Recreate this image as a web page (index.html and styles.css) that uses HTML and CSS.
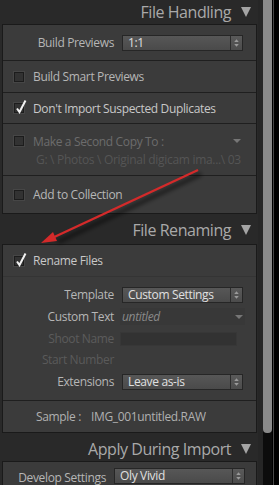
FILE: index.html
```html
<!DOCTYPE html>
<html>
<head>
<meta charset="utf-8">
<link rel="stylesheet" href="styles.css">
</head>
<body>
<div class="app">
  <div class="main">
    <div class="hdr h1"><span>File Handling</span><i class="tri"></i></div>
    <div class="panel">
      <div class="row r-prev">
        <span class="lbl">Build Previews</span>
        <div class="select"><span>1:1</span><svg class="stp" viewBox="0 0 12 15"><path d="M6 3.5 L8.5 6.5 H3.5Z M6 11.5 L8.5 8.5 H3.5Z" fill="#9a9a9a"/></svg></div>
      </div>
      <div class="row chk r-smart"><i class="box"></i><span>Build Smart Previews</span></div>
      <div class="row chk r-dup"><i class="box on"><svg viewBox="0 0 12 16"><path d="M2 9.5 L4.5 13 L10.5 1.5" fill="none" stroke="#f2f2f2" stroke-width="2"/></svg></i><span>Don't Import Suspected Duplicates</span></div>
      <div class="row r-copy">
        <div class="copy-top"><i class="box"></i><span class="dis">Make a Second Copy To :</span><i class="dtri"></i></div>
        <div class="path">G: \ Photos \ Original digicam ima...\ 03</div>
      </div>
      <div class="row chk r-coll"><i class="box"></i><span>Add to Collection</span></div>
    </div>

    <div class="hdr h2"><span>File Renaming</span><i class="tri"></i></div>
    <div class="panel">
      <div class="row chk r-ren"><i class="box on"><svg viewBox="0 0 12 16"><path d="M2 9.5 L4.5 13 L10.5 1.5" fill="none" stroke="#f2f2f2" stroke-width="2"/></svg></i><span>Rename Files</span></div>
      <div class="fields">
        <div class="frow f-tpl"><span class="lbl">Template</span><div class="select"><span>Custom Settings</span><svg class="stp" viewBox="0 0 12 15"><path d="M6 3.5 L8.5 6.5 H3.5Z M6 11.5 L8.5 8.5 H3.5Z" fill="#9a9a9a"/></svg></div></div>
        <div class="frow f-txt"><span class="lbl">Custom Text</span><div class="text"><em>untitled</em><i class="dtri"></i></div></div>
        <div class="frow f-shoot"><span class="lbl dis">Shoot Name</span><div class="input"></div></div>
        <div class="frow f-start"><span class="lbl dis">Start Number</span></div>
        <div class="frow f-ext"><span class="lbl">Extensions</span><div class="select"><span>Leave as-is</span><svg class="stp" viewBox="0 0 12 15"><path d="M6 3.5 L8.5 6.5 H3.5Z M6 11.5 L8.5 8.5 H3.5Z" fill="#9a9a9a"/></svg></div></div>
      </div>
      <div class="row r-sample"><span class="s-lbl">Sample :</span><span>IMG_001untitled.RAW</span></div>
    </div>

    <div class="hdr h3"><span>Apply During Import</span><i class="tri"></i></div>
    <div class="panel last">
      <div class="row r-dev">
        <span class="lbl">Develop Settings</span>
        <div class="select"><span>Oly Vivid</span><svg class="stp" viewBox="0 0 12 15"><path d="M6 3.5 L8.5 6.5 H3.5Z M6 11.5 L8.5 8.5 H3.5Z" fill="#9a9a9a"/></svg></div>
      </div>
    </div>
  </div>
  <div class="scroll">
    <div class="gutter"></div>
    <div class="track"><div class="thumb"></div></div>
    <div class="edge"></div>
  </div>
  <svg class="arrow" width="279" height="485" viewBox="0 0 279 485">
    <defs>
      <filter id="bl" x="-20%" y="-20%" width="140%" height="140%"><feGaussianBlur stdDeviation="2"/></filter>
    </defs>
    <path d="M201 174 L58 242" stroke="#000" stroke-opacity="0.55" stroke-width="4" filter="url(#bl)"/>
    <path d="M198 170 L50 239" stroke="#d42a2a" stroke-width="2.4"/>
    <path d="M41 243 L53 232 L57 241Z" fill="#d42a2a"/>
  </svg>
</div>
</body>
</html>
```
FILE: styles.css
```css
* { box-sizing: border-box; }
html, body { margin: 0; padding: 0; }
body {
  background: #282828;
  font-family: "Open Sans", "DejaVu Sans", sans-serif;
  font-size: 12px;
  letter-spacing: -0.35px;
  color: #b6b6b6;
  width: 279px;
  height: 485px;
  overflow: hidden;
}
.app { position: relative; display: flex; width: 279px; height: 485px; }
.main { width: 258px; background: #292929; }

.hdr {
  display: flex;
  align-items: center;
  justify-content: flex-end;
  padding-right: 7px;
  color: #a9a9a9;
  font-size: 16px;
  letter-spacing: -0.45px;
}
.hdr span { margin-right: 10px; }
.h1 { height: 24px; }
.h2 { height: 30px; padding-top: 2px; }
.h3 { height: 28px; padding-top: 3px; }
.tri {
  width: 0; height: 0;
  border-left: 5px solid transparent;
  border-right: 5px solid transparent;
  border-top: 10px solid #a4a4a4;
}

.panel {
  margin-left: 2px;
  width: 255px;
  background: #3b3b3b;
  border: 1px solid #1a1a1a;
}
.panel.last { height: 40px; border-bottom: 0; }
.row { border-top: 1px solid #1f1f1f; display: flex; align-items: center; }
.row:first-child { border-top: 0; }

.lbl { text-align: right; flex: none; }
.r-prev { height: 35px; }
.r-prev .lbl { width: 111px; margin-right: 8px; }

.select {
  display: flex;
  align-items: center;
  width: 121px;
  height: 16px;
  background: linear-gradient(#575757, #4a4a4a);
  border: 1px solid #262626;
  color: #e0e0e0;
  font-size: 12px;
  position: relative;
}
.select span { flex: 1; padding-left: 5px; line-height: 14px; }
.select .stp { width: 12px; height: 14px; border-left: 1px solid #2c2c2c; background: linear-gradient(#5a5a5a, #4c4c4c); }

.chk { padding-left: 11px; }
.chk span { margin-left: 9px; }
.box {
  display: block;
  position: relative;
  width: 10px; height: 10px;
  border: 1px solid #1c1c1c;
  background: #323232;
  box-shadow: 0 0 0 1px #464646;
  flex: none;
}
.box.on svg { position: absolute; left: 0; top: -5px; width: 12px; height: 16px; }

.r-smart { height: 32px; }
.r-dup { height: 31px; color: #c8c8c8; }
.r-copy { height: 52px; flex-direction: column; align-items: stretch; justify-content: center; padding-left: 11px; padding-top: 1px; }
.copy-top { display: flex; align-items: center; height: 18px; }
.copy-top span { margin-left: 9px; flex: 1; }
.dis { color: #6c6c6c; }
.dtri {
  width: 0; height: 0;
  border-left: 4px solid transparent;
  border-right: 4px solid transparent;
  border-top: 4px solid #767676;
  margin-right: 15px;
}
.path { color: #555; padding-left: 22px; height: 16px; line-height: 16px; margin-top: 2px; letter-spacing: -0.3px; }
.r-coll { height: 38px; }

.r-ren { height: 31px; color: #c8c8c8; }
.fields { border-top: 1px solid #343434; padding: 7px 0 7px; }
.frow { display: flex; align-items: center; height: 21px; }
.f-txt, .f-ext { height: 23px; }
.frow .lbl { width: 111px; margin-right: 8px; }
.f-txt .lbl, .f-shoot .lbl, .f-start .lbl { margin-right: 6px; }
.text {
  width: 125px; height: 17px;
  display: flex; align-items: center;
  background: #383838;
}
.text em { flex: 1; color: #8a8a8a; padding-left: 2px; }
.text .dtri { margin-right: 2px; }
.input { width: 117px; height: 14px; background: #323232; border: 1px solid #373737; }
.f-start .lbl { color: #5a5a5a; }
.f-shoot .lbl { color: #5c5c5c; }

.r-sample { height: 32px; padding-left: 33px; color: #b0b0b0; }
.s-lbl { margin-right: 10px; }

.r-dev { height: 32px; padding-top: 6px; align-items: flex-start; }
.r-dev .lbl { width: 103px; margin-right: 8px; padding-top: 1px; }
.r-dev .select { width: 131px; }

.scroll { width: 21px; display: flex; background: #000; }
.gutter { width: 5px; background: #262626; }
.track { width: 9px; background: #0c0c0c; }
.thumb { height: 433px; background: #8a8a8a; border-radius: 0 0 4px 4px; }
.edge { width: 1px; margin-left: 1px; background: #474747; }

.arrow { position: absolute; left: 0; top: 0; pointer-events: none; }
```
